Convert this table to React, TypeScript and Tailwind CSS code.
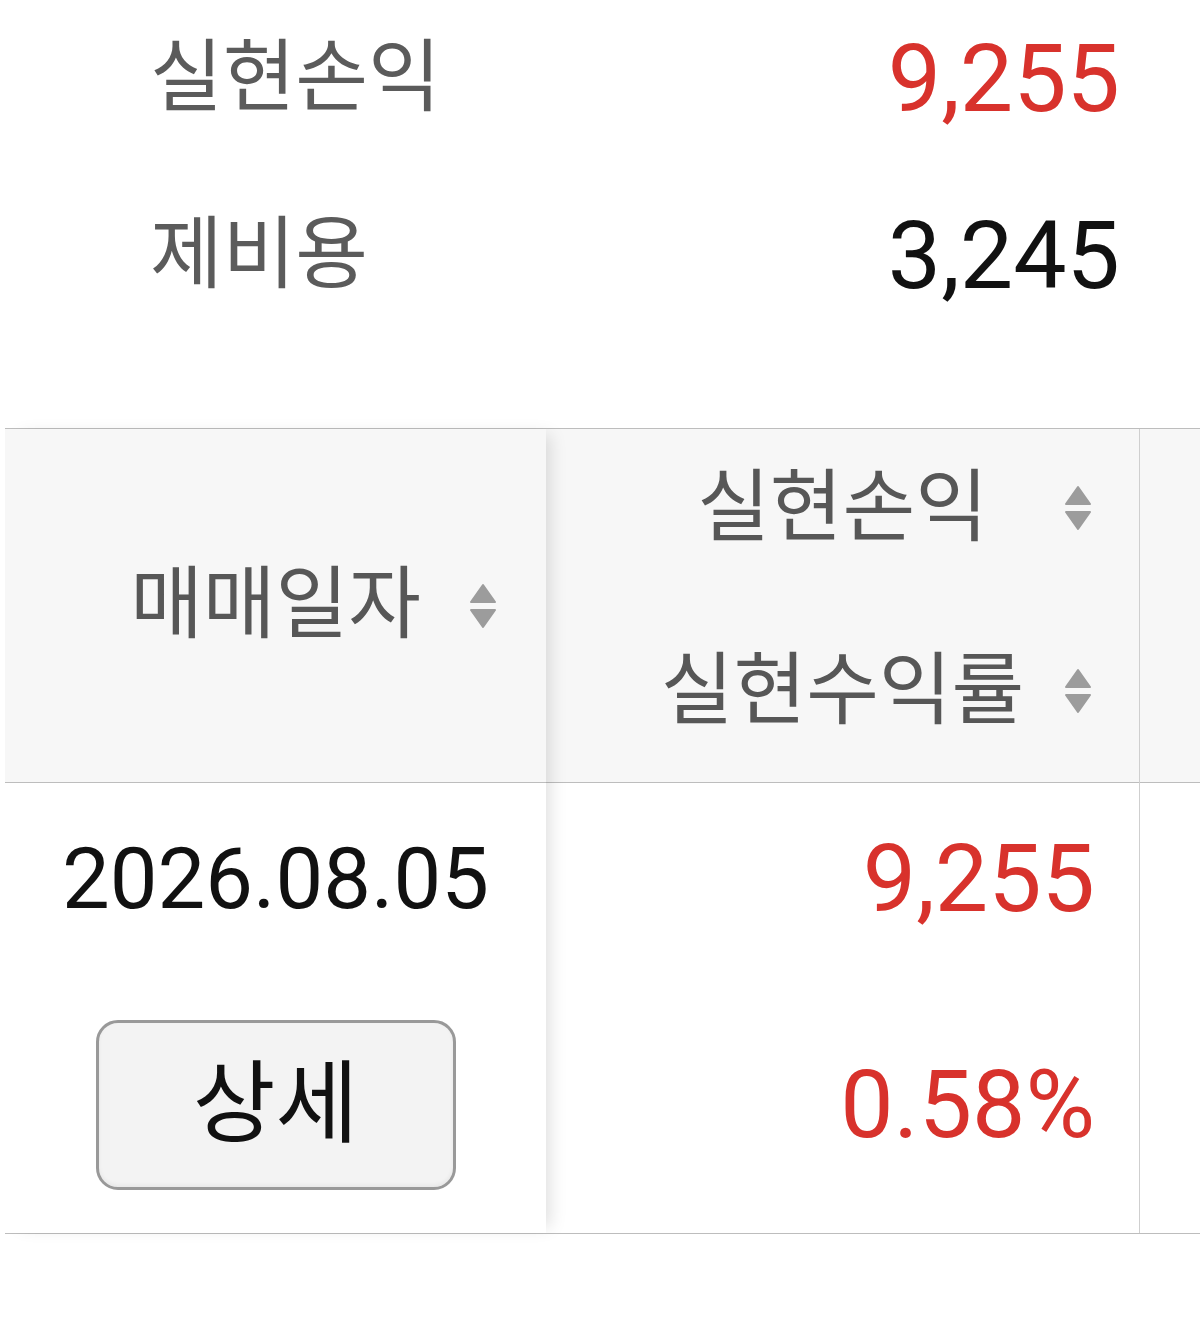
import React from "react";

const SortIcon = () => (
  <svg width="28" height="46" viewBox="0 0 28 46" className="shrink-0">
    <path d="M14 2 L26 19 L2 19 Z" fill="#9c9c9c" stroke="#9c9c9c" strokeWidth="2" strokeLinejoin="round" />
    <path d="M2 27 L26 27 L14 44 Z" fill="#9c9c9c" stroke="#9c9c9c" strokeWidth="2" strokeLinejoin="round" />
  </svg>
);

const red = "text-[#d8322c]";

export default function App() {
  return (
    <div className="w-[1200px] h-[1341px] bg-white overflow-hidden font-[Roboto,'Noto_Sans_CJK_KR',sans-serif]">
      {/* summary */}
      <div className="pl-[150px] pr-[80px]">
        <div className="flex h-[156px] items-center justify-between">
          <span className="text-[79px] leading-none text-[#5b5b5b]">실현손익</span>
          <span className={`text-[95px] leading-none ${red}`}>9,255</span>
        </div>
        <div className="flex h-[198px] items-center justify-between">
          <span className="text-[79px] leading-none text-[#5b5b5b]">제비용</span>
          <span className="text-[95px] leading-none text-[#111]">3,245</span>
        </div>
      </div>

      {/* table */}
      <div className="mt-[74px] ml-[5px] flex border-y border-[#bdbdbd]">
        <div className="relative z-10 w-[541px] shrink-0 shadow-[10px_0_16px_-6px_rgba(0,0,0,0.13)]">
          <div className="flex h-[354px] items-center justify-center border-b border-[#bdbdbd] bg-[#f7f7f7]">
            <span className="relative text-[79px] leading-none text-[#575757]">
              매매일자
              <span className="absolute left-full top-1/2 ml-[48px] -translate-y-1/2">
                <SortIcon />
              </span>
            </span>
          </div>
          <div className="flex h-[450px] flex-col items-center bg-white pt-[56px]">
            <div className="flex h-[80px] items-center text-[85px] leading-none text-[#111]">2026.08.05</div>
            <button className="mt-[101px] flex h-[170px] w-[360px] items-center justify-center rounded-[22px] border-[3px] border-[#999] bg-[#f3f3f3] text-[90px] leading-none text-[#111] shadow-[inset_0_-2px_4px_rgba(0,0,0,0.05)]">
              상세
            </button>
          </div>
        </div>

        <div className="w-[594px] shrink-0 border-r border-[#cfcfcf]">
          <div className="flex h-[354px] flex-col gap-[103px] border-b border-[#bdbdbd] bg-[#f7f7f7] pt-[39px]">
            <div className="relative flex h-[80px] items-center justify-center">
              <span className="text-[79px] leading-none text-[#575757]">실현손익</span>
              <span className="absolute right-[47px] top-1/2 -translate-y-1/2">
                <SortIcon />
              </span>
            </div>
            <div className="relative flex h-[80px] items-center justify-center">
              <span className="text-[79px] leading-none text-[#575757]">실현수익률</span>
              <span className="absolute right-[47px] top-1/2 -translate-y-1/2">
                <SortIcon />
              </span>
            </div>
          </div>
          <div className="flex h-[450px] flex-col items-end gap-[146px] bg-white pr-[44px] pt-[55px]">
            <div className={`flex h-[80px] items-center text-[95px] leading-none ${red}`}>9,255</div>
            <div className={`flex h-[80px] items-center text-[95px] leading-none ${red}`}>0.58%</div>
          </div>
        </div>

        <div className="flex-1">
          <div className="h-[354px] border-b border-[#bdbdbd] bg-[#f7f7f7]" />
          <div className="h-[450px] bg-white" />
        </div>
      </div>
    </div>
  );
}
